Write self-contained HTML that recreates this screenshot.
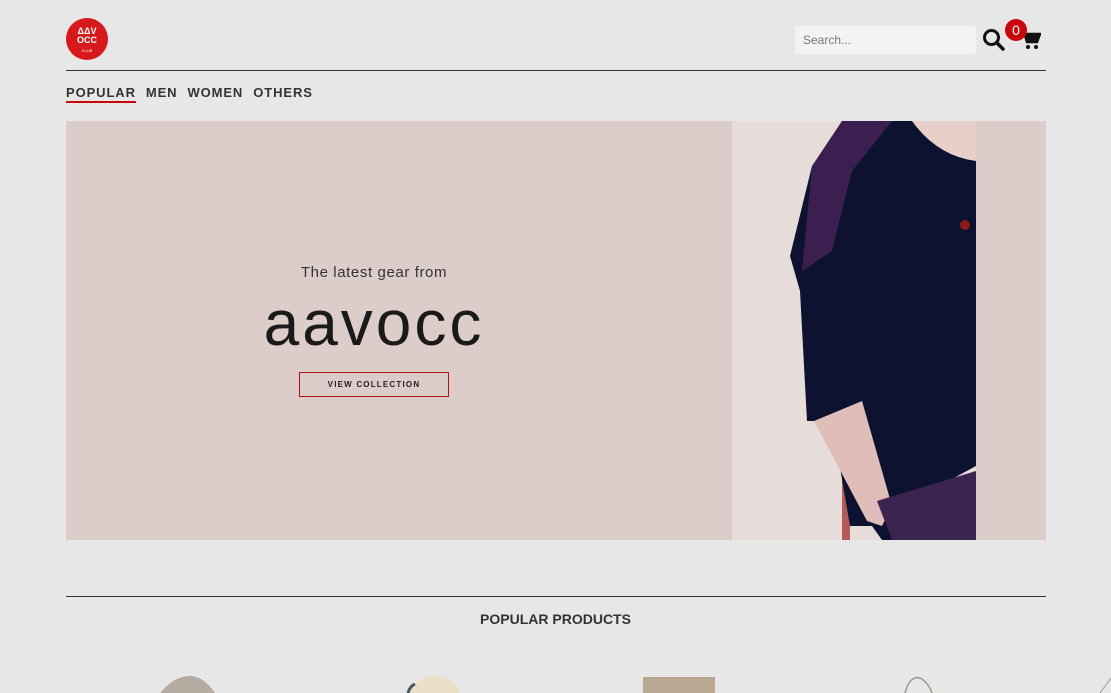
<!DOCTYPE html>
<html><head><meta charset="utf-8"><style>
*{margin:0;padding:0;box-sizing:border-box}
body{width:1111px;height:693px;overflow:hidden;background:#e8e7e7;font-family:"Liberation Sans",sans-serif;color:#222;position:relative}
.abs{position:absolute}
.logo{left:66px;top:18px;width:42px;height:42px;border-radius:50%;background:#d7191c;color:#fff;text-align:center;font-weight:bold;font-size:9px;line-height:9px;padding-top:9px}
.search{left:795px;top:26px;width:181px;height:28px;background:#f3f3f3;border-radius:3px;font-size:12px;color:#777;padding:7px 8px}
.hr{left:66px;width:980px;height:1px;background:#333}
.nav{top:85px;left:66px;font-size:13px;font-weight:bold;color:#333;letter-spacing:.9px}
.nav span{margin-right:10px}
.hero{left:66px;top:121px;width:980px;height:419px;background:#dccdca}
</style></head><body>
<div class="abs logo">ΔΔV<br>OCC<br><span style="font-size:4px;font-weight:normal">CLUB</span></div>
<div class="abs search">Search...</div>
<svg class="abs" style="left:982px;top:28px" width="24" height="24" viewBox="0 0 24 24"><circle cx="9.5" cy="9.5" r="7" fill="none" stroke="#111" stroke-width="3"/><path d="M14.5 14.5L21 21" stroke="#111" stroke-width="3.5" stroke-linecap="round"/></svg>
<svg class="abs" style="left:1019px;top:30px" width="22" height="20" viewBox="0 0 22 20"><path d="M1 2h4l3 10h10l3-8H7" fill="none" stroke="#111" stroke-width="2.5"/><path d="M7 5h13l-2 6H9z" fill="#111"/><circle cx="9" cy="17" r="2" fill="#111"/><circle cx="17" cy="17" r="2" fill="#111"/></svg>
<div class="abs" style="left:1005px;top:19px;width:22px;height:22px;border-radius:50%;background:#c8070d;color:#fff;font-size:14px;text-align:center;line-height:22px">0</div>
<div class="abs hr" style="top:70px"></div>
<div class="abs nav"><span style="border-bottom:2px solid #c8070d;padding-bottom:1px">POPULAR</span><span>MEN</span><span>WOMEN</span><span>OTHERS</span></div>
<div class="abs hero"></div>
<svg class="abs" style="left:732px;top:121px" width="244" height="419" viewBox="0 0 244 419">
<rect width="244" height="419" fill="#e6dcd9"/>
<rect x="110" width="8" height="419" fill="#b45a5a"/>
<path d="M170 0h74v40q-30 5-50-15z" fill="#e8cfc9"/>
<path d="M118 0 L180 0 Q205 35 244 40 V345 L170 385 L172 419 L150 419 L140 405 L118 405 L100 300 L75 300 L68 170 L58 135 L80 45 Z" fill="#0c1230"/>
<path d="M110 0 L160 0 L120 50 L100 130 L70 150 L80 45Z" fill="#3a1f50"/>
<path d="M82 300 L130 280 L160 385 L150 405 L135 400 Z" fill="#e0bdb8"/>
<path d="M145 380 L244 350 V419 L160 419Z" fill="#3b2550"/>
<circle cx="233" cy="104" r="5" fill="#8b1a1a"/>
</svg>
<div class="abs" style="left:66px;width:616px;top:264px;text-align:center;font-size:15px;color:#333;letter-spacing:.6px">The latest gear from</div>
<div class="abs" style="left:66px;width:616px;top:288px;text-align:center;font-size:64px;color:#1a1a1a;letter-spacing:3px;line-height:70px">aavocc</div>
<div class="abs" style="left:299px;top:372px;width:150px;height:25px;border:1px solid #b01010;font-size:8px;font-weight:bold;letter-spacing:1.2px;text-align:center;line-height:23px;color:#222">VIEW COLLECTION</div>
<div class="abs hr" style="top:596px"></div>
<div class="abs" style="left:0;width:1111px;top:611px;text-align:center;font-size:14px;font-weight:bold;color:#333">POPULAR PRODUCTS</div>
<svg class="abs" style="left:0;top:670px" width="1111" height="23">
<path d="M160 23 Q175 5 192 6 Q205 8 215 23Z" fill="#b5aba0"/>
<path d="M408 23 Q420 4 440 6 Q455 10 460 23Z" fill="#ecdfc8"/><path d="M408 23 Q410 16 415 14" stroke="#456" stroke-width="3" fill="none"/>
<rect x="643" y="7" width="72" height="16" fill="#b9a791"/>
<path d="M905 23 Q910 5 920 8 Q928 12 932 23" stroke="#998" stroke-width="1.5" fill="none"/>
<path d="M1100 23 L1111 8" stroke="#999" stroke-width="1" fill="none"/>
</svg>
</body></html>
